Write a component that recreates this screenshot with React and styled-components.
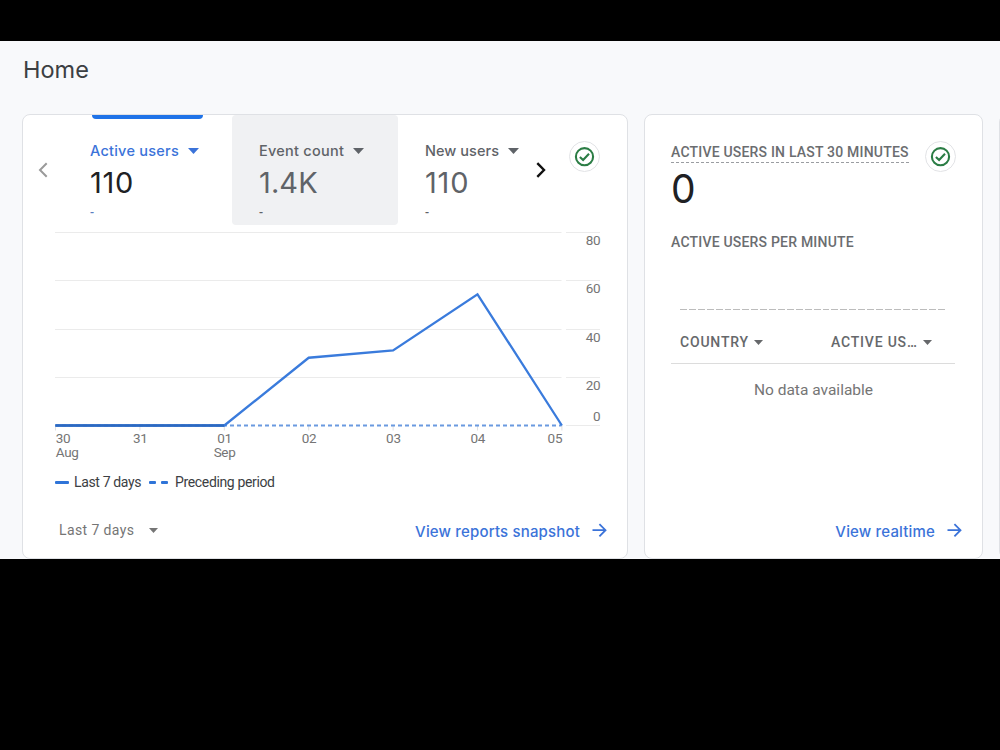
import React from 'react';
import styled, { createGlobalStyle } from 'styled-components';

const GlobalStyle = createGlobalStyle`
  * {
    box-sizing: border-box;
  }

  body {
    margin: 0;
    background: #000;
    font-family: Roboto, "Liberation Sans", sans-serif;
  }
`;

const Screen = styled.div`
  width: 1000px;
  height: 750px;
  padding-top: 41px;
  background: #000;
  overflow: hidden;
`;

const Page = styled.main`
  height: 518px;
  padding: 0 0 0 22px;
  background: #f8f9fb;
  overflow: hidden;
`;

const Title = styled.h1`
  height: 73px;
  margin: 0;
  padding: 14px 0 0 1px;
  font: 400 23.5px/30px Inter, sans-serif;
  color: #3c4043;
`;

const Cards = styled.div`
  display: flex;
  gap: 16px;
`;

const Card = styled.section`
  flex: none;
  display: flex;
  flex-direction: column;
  width: ${(props) => props.$width}px;
  height: 445px;
  padding: ${(props) => props.$padding || '0'};
  background: #fff;
  border: 1px solid #dfe1e5;
  border-radius: 8px;
`;

const Carousel = styled.div`
  display: flex;
  height: 110px;
`;

const ArrowButton = styled.button`
  flex: none;
  display: flex;
  justify-content: center;
  width: ${(props) => props.$width}px;
  padding: 47px 0 0;
  border: 0;
  background: none;
  color: ${(props) => (props.disabled ? '#9a9a9a' : '#111')};
`;

const Tab = styled.div`
  flex: none;
  width: ${(props) => props.$width}px;
  height: 110px;
  padding: 0 0 0 27px;
  border-radius: 4px;
  background: ${(props) => (props.$hovered ? '#f0f1f3' : 'transparent')};
`;

const Indicator = styled.div`
  width: 111px;
  height: 4px;
  margin-left: 2px;
  border-radius: 0 0 4px 4px;
  background: ${(props) => (props.$active ? '#1f73e8' : 'transparent')};
`;

const TabLabel = styled.div`
  display: flex;
  align-items: center;
  gap: 9px;
  height: 20px;
  margin-top: 22px;
  font: 500 14.5px/20px Inter, sans-serif;
  letter-spacing: ${(props) => props.$spacing}px;
  white-space: nowrap;
  color: ${(props) => (props.$active ? '#3b73d9' : '#5f6368')};
`;

const TabValue = styled.div`
  height: 36px;
  margin-top: 4px;
  font: 400 29px/36px Inter, sans-serif;
  letter-spacing: ${(props) => props.$spacing}px;
  color: ${(props) => (props.$active ? '#202124' : '#5f6368')};
`;

const TabChange = styled.div`
  font: 500 12px/16px Roboto, sans-serif;
  margin-top: 4px;
  color: ${(props) => (props.$active ? '#5b7fc0' : '#5f6368')};
`;

const Badge = styled.div`
  flex: none;
  display: flex;
  align-items: center;
  justify-content: center;
  width: 31px;
  height: 31px;
  margin: ${(props) => props.$margin || '0'};
  border: 1px solid #e2e3e6;
  border-radius: 50%;
`;

const Chart = styled.svg`
  flex: none;
  display: block;
  margin-left: 32px;
  font: 400 13.5px Roboto, sans-serif;
  letter-spacing: -0.3px;
`;

const Legend = styled.div`
  display: flex;
  align-items: center;
  height: 20px;
  margin: 8px 0 0 32px;
  font-size: 14px;
  letter-spacing: -0.36px;
  color: #3c4043;
`;

const LegendLine = styled.span`
  width: ${(props) => props.$width}px;
  height: 3px;
  margin-right: 5px;
  border-radius: 1px;
  background: #2f74d8;
`;

const LegendText = styled.span`
  padding: ${(props) => props.$padding};
  white-space: nowrap;
`;

const Footer = styled.footer`
  display: flex;
  align-items: center;
  justify-content: space-between;
  height: 30px;
  margin-top: auto;
  margin-bottom: 12px;
`;

const RangeSelect = styled.div`
  display: flex;
  align-items: center;
  gap: 15px;
  padding: 0 0 2px 36px;
  font-size: 14px;
  letter-spacing: 0.4px;
  color: #757575;
`;

const CardLink = styled.a`
  display: flex;
  align-items: center;
  gap: 12px;
  margin-left: auto;
  padding: 1px 20px 0 0;
  font: 500 15px/20px Inter, sans-serif;
  letter-spacing: 0.17px;
  color: #3b73d9;

  svg {
    margin-top: -2px;
  }
`;

const LiveHeader = styled.div`
  display: flex;
  justify-content: space-between;
  height: 31px;
  padding-right: 26px;
`;

const Heading = styled.h2`
  align-self: flex-start;
  margin: ${(props) => props.$top || 0}px 0 0;
  font: 500 14px/16px Roboto, sans-serif;
  letter-spacing: 0.2px;
  white-space: nowrap;
  color: #6b6d70;
  ${(props) => props.$hint && 'padding-bottom: 2px; border-bottom: 1px dashed #9a9da1;'}
`;

const LiveCount = styled.div`
  height: 48px;
  margin-top: -7px;
  font: 400 39px/48px Inter, sans-serif;
  color: #202124;
`;

const MinuteBars = styled.div`
  display: flex;
  gap: 2px;
  margin: 59px 37px 0 9px;
`;

const MinuteBar = styled.span`
  flex: 1;
  height: 1px;
  background: #bcbcbc;
`;

const TableHead = styled.div`
  display: flex;
  align-items: center;
  height: 54px;
  margin-right: 27px;
  padding: 11px 0 0 9px;
  border-bottom: 1px solid #dcdcdc;
`;

const Column = styled.div`
  display: flex;
  align-items: center;
  gap: 5px;
  width: ${(props) => props.$width}px;
  font: 500 14px/16px Roboto, sans-serif;
  letter-spacing: 0.8px;
  white-space: nowrap;
  color: #66686b;
`;

const EmptyState = styled.div`
  padding: 16px 26px 0 0;
  font-size: 15.5px;
  line-height: 20px;
  text-align: center;
  color: #757575;
`;

const metrics = [
  { label: 'Active users', value: '110', active: true, spacing: 0.25, valueSpacing: 0.7, width: 169 },
  { label: 'Event count', value: '1.4K', hovered: true, spacing: 0.25, valueSpacing: 0.1, width: 166 },
  { label: 'New users', value: '110', spacing: 0.05, valueSpacing: 0.8, width: 133 },
];

const days = [
  { day: '30', month: 'Aug', users: 0 },
  { day: '31', users: 0 },
  { day: '01', month: 'Sep', users: 0 },
  { day: '02', users: 28 },
  { day: '03', users: 31 },
  { day: '04', users: 54.2 },
  { day: '05', users: 0 },
];

const ticks = [80, 60, 40, 20, 0];
const BASE = 200.5;

const xAt = (i) => i * 84.4;
const yAt = (users) => BASE - users * 2.42;

function Caret({ width = 11, height = 6 }) {
  return (
    <svg width={width} height={height} viewBox="0 0 10 5" preserveAspectRatio="none">
      <path d="M0 0h10L5 5z" fill="currentColor" />
    </svg>
  );
}

function ChevronIcon({ left }) {
  return (
    <svg width="10" height="16" viewBox="0 0 10 16" fill="none" stroke="currentColor" strokeWidth={left ? 2 : 2.4}>
      <path d={left ? 'M8.7 1.2L2 8l6.7 6.8' : 'M1.3 1.2L8 8l-6.7 6.8'} />
    </svg>
  );
}

function ArrowIcon() {
  return (
    <svg width="15" height="15" viewBox="0 0 15 15" fill="none" stroke="currentColor" strokeWidth="1.8">
      <path d="M0.5 7.2H13M7.4 1.1l6.1 6.1-6.1 6.1" />
    </svg>
  );
}

function StatusBadge({ margin }) {
  return (
    <Badge $margin={margin}>
      <svg width="21" height="21" viewBox="0 0 21 21" fill="none" stroke="#2b7d45" strokeWidth="2.1">
        <circle cx="10.5" cy="10.7" r="8.6" />
        <path d="M5.9 10.9l3.2 3.1 5.9-6.3" />
      </svg>
    </Badge>
  );
}

function UsersChart() {
  const points = days.map((d, i) => `${xAt(i) + 0.5},${yAt(d.users)}`).join(' ');
  return (
    <Chart width="546" height="239" viewBox="0 0 546 239">
      {ticks.map((tick) => {
        const y = Math.round(yAt(tick) - 0.2) + 0.5;
        return (
          <g key={tick}>
            {tick > 0 && <path d={`M0 ${y}H506.5`} stroke="#ebebeb" />}
            <path d={`M511 ${y}H545`} stroke="#ebebeb" />
            <text x="545.3" y={tick > 0 ? y + 12.8 : y - 4.2} textAnchor="end" fill="#757575">{tick}</text>
          </g>
        );
      })}
      {days.map((d, i) => {
        const anchor = i === 0 ? 'start' : i === days.length - 1 ? 'end' : 'middle';
        return (
          <g key={d.day} fill="#757575" textAnchor={anchor}>
            <path d={`M${xAt(i) + 0.5} ${BASE}v5`} stroke="#e0e0e0" />
            <text x={xAt(i) + 0.8} y="218">{d.day}</text>
            {d.month && <text x={xAt(i) + 0.8} y="232">{d.month}</text>}
          </g>
        );
      })}
      <path d={`M0 ${BASE}H506.5`} stroke="#6a9ae0" strokeWidth="1.8" strokeDasharray="4 3" />
      <polyline points={points} fill="none" stroke="#3a7bdc" strokeWidth="2.3" />
      <path d={`M0.5 ${BASE}H169`} stroke="#2c69c0" strokeWidth="2.3" />
    </Chart>
  );
}

function OverviewCard() {
  return (
    <Card $width={606}>
      <Carousel>
        <ArrowButton $width={40} disabled><ChevronIcon left /></ArrowButton>
        {metrics.map((m) => (
          <Tab key={m.label} $width={m.width} $hovered={m.hovered}>
            <Indicator $active={m.active} />
            <TabLabel $active={m.active} $spacing={m.spacing}>{m.label} <Caret /></TabLabel>
            <TabValue $active={m.active} $spacing={m.valueSpacing}>{m.value}</TabValue>
            <TabChange $active={m.active}>-</TabChange>
          </Tab>
        ))}
        <ArrowButton $width={20}><ChevronIcon /></ArrowButton>
        <StatusBadge margin="26px 0 0 18px" />
      </Carousel>
      <UsersChart />
      <Legend>
        <LegendLine $width={14} />
        <LegendText $padding="0 8px 0 0">Last 7 days</LegendText>
        <LegendLine $width={7} />
        <LegendLine $width={7} />
        <LegendText $padding="0 0 0 2px">Preceding period</LegendText>
      </Legend>
      <Footer>
        <RangeSelect>Last 7 days <Caret width={9} height={5} /></RangeSelect>
        <CardLink>View reports snapshot <ArrowIcon /></CardLink>
      </Footer>
    </Card>
  );
}

function RealtimeCard() {
  return (
    <Card $width={339} $padding="26px 0 0 26px">
      <LiveHeader>
        <Heading $hint $top={3}>ACTIVE USERS IN LAST 30 MINUTES</Heading>
        <StatusBadge />
      </LiveHeader>
      <LiveCount>0</LiveCount>
      <Heading $top={21}>ACTIVE USERS PER MINUTE</Heading>
      <MinuteBars>
        {Array.from({ length: 30 }, (_, i) => <MinuteBar key={i} />)}
      </MinuteBars>
      <TableHead>
        <Column $width={151}>COUNTRY <Caret width={9} height={5} /></Column>
        <Column>ACTIVE US… <Caret width={9} height={5} /></Column>
      </TableHead>
      <EmptyState>No data available</EmptyState>
      <Footer>
        <CardLink>View realtime <ArrowIcon /></CardLink>
      </Footer>
    </Card>
  );
}

export default function App() {
  return (
    <>
      <GlobalStyle />
      <Screen>
        <Page>
          <Title>Home</Title>
          <Cards>
            <OverviewCard />
            <RealtimeCard />
            <Card $width={340} />
          </Cards>
        </Page>
      </Screen>
    </>
  );
}
